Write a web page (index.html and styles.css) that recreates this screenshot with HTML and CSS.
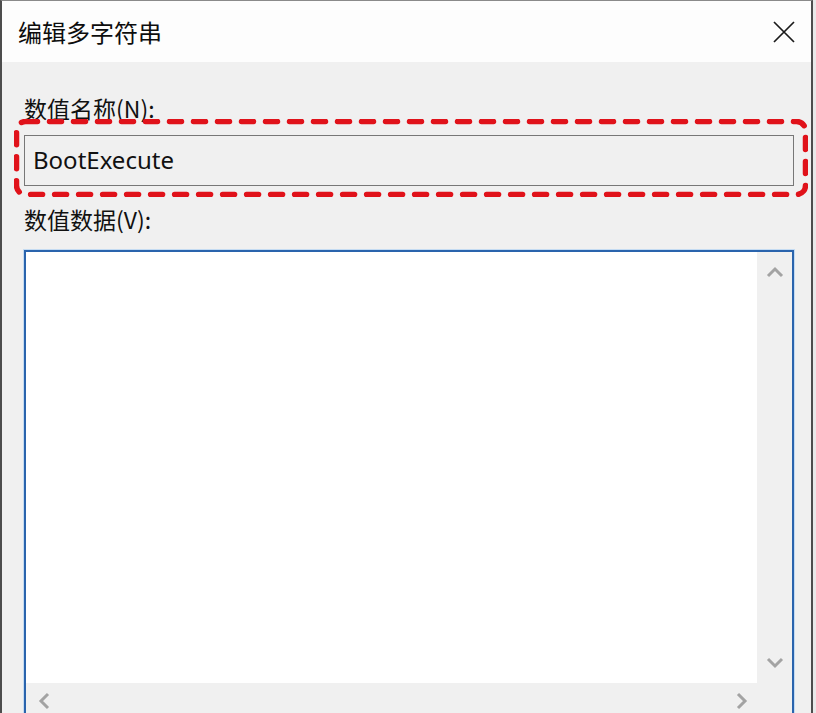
FILE: index.html
```html
<!DOCTYPE html>
<html lang="zh-CN">
<head>
<meta charset="utf-8">
<title>编辑多字符串</title>
<link rel="stylesheet" href="styles.css">
</head>
<body>
<div class="window">
  <div class="titlebar">
    <span class="title">编辑多字符串</span>
    <svg class="close" width="22" height="22" viewBox="0 0 22 22"><path d="M1 1 L21 21 M21 1 L1 21" stroke="#1a1a1a" stroke-width="1.7" fill="none"/></svg>
  </div>
  <div class="content">
    <div class="label first">数值名称(N):</div>
    <div class="name-wrap">
      <div class="input">BootExecute</div>
      <svg class="highlight" width="794" height="78" viewBox="0 0 794 78"><rect x="2.5" y="2.5" width="789" height="73" rx="9" ry="9" fill="none" stroke="#e0121a" stroke-width="5.5" stroke-dasharray="12 12" stroke-linecap="round"/></svg>
    </div>
    <div class="label second">数值数据(V):</div>
    <div class="textarea">
      <div class="text-area-body"></div>
      <div class="vbar">
        <svg width="18" height="12" viewBox="0 0 18 12"><path d="M2 10 L9 3 L16 10" stroke="#a3a3a3" stroke-width="3" fill="none"/></svg>
        <svg width="18" height="12" viewBox="0 0 18 12"><path d="M2 2 L9 9 L16 2" stroke="#a3a3a3" stroke-width="3" fill="none"/></svg>
      </div>
      <div class="hbar">
        <svg width="12" height="18" viewBox="0 0 12 18"><path d="M10 2 L3 9 L10 16" stroke="#a3a3a3" stroke-width="3" fill="none"/></svg>
        <svg width="12" height="18" viewBox="0 0 12 18"><path d="M2 2 L9 9 L2 16" stroke="#a3a3a3" stroke-width="3" fill="none"/></svg>
      </div>
      <div class="corner"></div>
    </div>
  </div>
</div>
</body>
</html>
```
FILE: styles.css
```css
html, body {
  margin: 0;
  padding: 0;
  background: #e9e9e9;
}
body {
  width: 816px;
  height: 713px;
  overflow: hidden;
}
.window {
  box-sizing: border-box;
  width: 813px;
  height: 713px;
  border-left: 2px solid #4d4d4d;
  border-right: 2px solid #4d4d4d;
  border-top: 1px solid #8a8a8a;
  background: #f0f0f0;
  display: flex;
  flex-direction: column;
  overflow: hidden;
  font-family: "Noto Sans CJK SC", "Noto Sans", sans-serif;
  color: #111;
}
.titlebar {
  height: 61px;
  flex: none;
  background: #fdfdfd;
  display: flex;
  align-items: center;
  justify-content: space-between;
  padding: 0 16px 0 16px;
}
.title {
  font-size: 24px;
  line-height: 30px;
  color: #0d0d0d;
}
.close {
  display: block;
}
.content {
  flex: 1;
  padding: 31px 17px 0 22px;
  display: flex;
  flex-direction: column;
}
.label {
  font-size: 23px;
  line-height: 30px;
  color: #111;
}
.name-wrap {
  position: relative;
  margin-top: 12px;
}
.input {
  box-sizing: border-box;
  height: 51px;
  border: 1px solid #777;
  background: #f0f0f0;
  padding-left: 8px;
  font-family: "Noto Sans", "Open Sans", sans-serif;
  font-size: 24px;
  line-height: 47px;
  color: #111;
}
.highlight {
  position: absolute;
  left: -10px;
  top: -16px;
}
.label.second {
  margin-top: 18px;
}
.textarea {
  margin-top: 16px;
  box-sizing: border-box;
  height: 480px;
  border: 2px solid #2a64ad;
  box-shadow: 0 0 0 1px #c4dbf2;
  background: #fff;
  display: grid;
  grid-template-columns: 1fr 35px;
  grid-template-rows: 431px 35px;
}
.vbar {
  background: #f0f0f0;
  display: flex;
  flex-direction: column;
  justify-content: space-between;
  align-items: center;
  padding: 14px 0 14px;
}
.hbar {
  background: #f0f0f0;
  display: flex;
  justify-content: space-between;
  align-items: center;
  padding: 0 9px 0 12px;
}
.corner {
  background: #f0f0f0;
}
```
